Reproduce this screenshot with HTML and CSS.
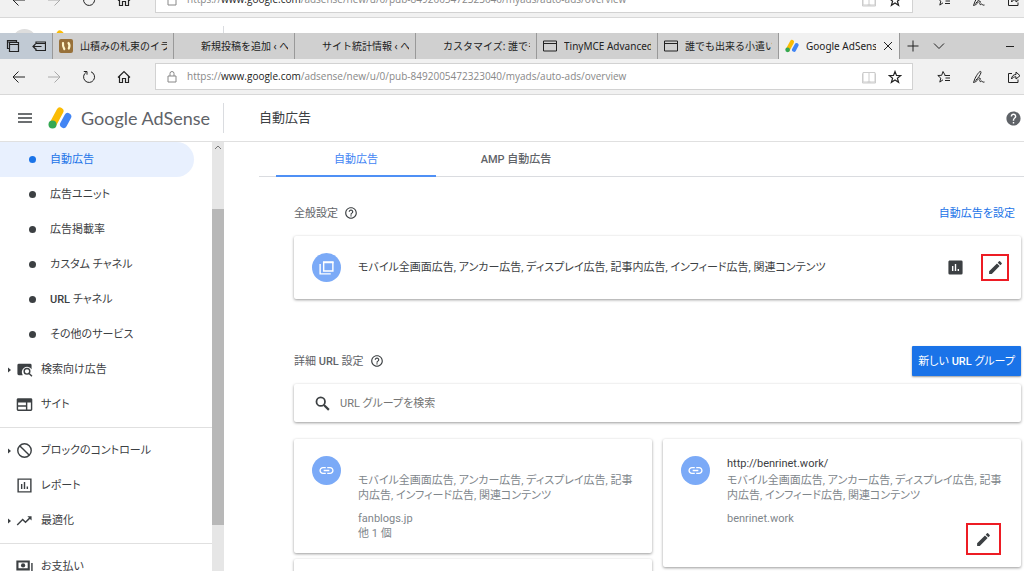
FILE: index.html
```html
<!DOCTYPE html>
<html lang="ja">
<head>
<meta charset="utf-8">
<title>Google AdSense</title>
<link rel="stylesheet" href="styles.css">
</head>
<body>
<svg class="sprite" aria-hidden="true">
  <symbol id="back" viewBox="0 0 14 14"><path d="M13 7H1.500M6.500 1.500 1 7l5.500 5.500" fill="none" stroke="currentColor"/></symbol>
  <symbol id="forward" viewBox="0 0 14 14"><path d="M1 7h11.500M7.500 1.500 13 7l-5.500 5.500" fill="none" stroke="currentColor"/></symbol>
  <symbol id="reload" viewBox="0 0 14 14"><path d="M9 1.800A5.500 5.500 0 1 1 4.300 2.200M1.800 1.500H5v3.200" fill="none" stroke="currentColor"/></symbol>
  <symbol id="home" viewBox="0 0 14 14"><path d="M1 7.500 7 1.500l6 6M2.500 6v6.500h3v-4h3v4h3V6" fill="none" stroke="currentColor" stroke-width="1.200"/></symbol>
  <symbol id="lock" viewBox="0 0 10 14"><path d="M1 6h8v6H1zM3 6V3.500a2 2 0 0 1 4 0V6" fill="none" stroke="currentColor"/></symbol>
  <symbol id="book" viewBox="0 0 14 14"><path d="M7 3v9M1 2.500h12v9.500H1z" fill="none" stroke="currentColor"/><path d="M.5 3.500v9.500h13V3.500M5.500 12h3" fill="none" stroke="currentColor"/></symbol>
  <symbol id="star" viewBox="0 0 14 14"><path d="m7 1.500 1.500 3.900 4.200.2-3.300 2.600 1.200 4.100L7 10l-3.600 2.300 1.200-4.100-3.300-2.600 4.200-.2z" fill="none" stroke="currentColor" stroke-width="1.200"/></symbol>
  <symbol id="hub" viewBox="0 0 14 14"><path d="M8 5 6 1.500 4.700 5.300.8 5.500l3 2.600-1 4L6 9.800M7.500 5.500H13M8.500 8H13M8 10.500h5" fill="none" stroke="currentColor"/></symbol>
  <symbol id="pen" viewBox="0 0 14 14"><path d="M1.500 12.500 3 8.500C5 4.500 7.500 1 8.700 1.500 10 2.200 7 7.500 3.500 10.500M1.500 12.500C5 12 7 7.500 8 8c1 .5-1 3 0 3.500s1.500-1 2-.5 0 1.500 2.500 1" fill="none" stroke="currentColor"/></symbol>
  <symbol id="share" viewBox="0 0 14 14"><path d="M5 3.500H1.500v9h9.500V9.500M4.500 9c.3-3 2-4.500 4.500-4.500V2L13 5.700 9 9V6.800C7 6.800 5.500 7.500 4.500 9z" fill="none" stroke="currentColor"/></symbol>
  <symbol id="ads" viewBox="0 0 24 22"><path d="M5 17 12 4" stroke="#fbbc04" stroke-width="7" stroke-linecap="round"/><path d="m15.500 17.500 4.300-8" stroke="#4285f4" stroke-width="7" stroke-linecap="round"/><circle cx="4.500" cy="17.500" r="4" fill="#34a853"/></symbol>
  <symbol id="window" viewBox="0 0 14 14"><path d="M.5 2h13v10H.5zM.5 4.500h13" fill="none" stroke="currentColor"/></symbol>
  <symbol id="help" viewBox="0 0 24 24"><path fill="currentColor" d="M11 18h2v-2h-2v2zm1-16C6.480 2 2 6.480 2 12s4.480 10 10 10 10-4.480 10-10S17.520 2 12 2zm0 18c-4.410 0-8-3.590-8-8s3.590-8 8-8 8 3.590 8 8-3.590 8-8 8zm0-14c-2.210 0-4 1.790-4 4h2c0-1.100.9-2 2-2s2 .9 2 2c0 2-3 1.750-3 5h2c0-2.250 3-2.500 3-5 0-2.210-1.790-4-4-4z"/></symbol>
  <symbol id="help-solid" viewBox="0 0 24 24"><path fill="currentColor" d="M12 2C6.480 2 2 6.480 2 12s4.480 10 10 10 10-4.480 10-10S17.520 2 12 2zm1 17h-2v-2h2v2zm2.070-7.750-.9.920C13.450 12.900 13 13.500 13 15h-2v-.5c0-1.100.45-2.100 1.170-2.830l1.240-1.260c.37-.36.59-.86.59-1.410 0-1.100-.9-2-2-2s-2 .9-2 2H8c0-2.210 1.790-4 4-4s4 1.790 4 4c0 .88-.36 1.680-.93 2.250z"/></symbol>
  <symbol id="edit" viewBox="0 0 24 24"><path fill="currentColor" d="M3 17.250V21h3.750L17.810 9.940l-3.750-3.750L3 17.250zM20.710 7.040a1 1 0 0 0 0-1.410l-2.340-2.340a1 1 0 0 0-1.410 0l-1.830 1.830 3.750 3.750 1.830-1.830z"/></symbol>
  <symbol id="link" viewBox="0 0 24 24"><path fill="currentColor" d="M3.900 12c0-1.710 1.390-3.100 3.100-3.100h4V7H7c-2.760 0-5 2.240-5 5s2.240 5 5 5h4v-1.900H7c-1.710 0-3.100-1.390-3.100-3.100zM8 13h8v-2H8v2zm9-6h-4v1.900h4c1.710 0 3.100 1.390 3.100 3.100s-1.390 3.100-3.100 3.100h-4V17h4c2.760 0 5-2.240 5-5s-2.240-5-5-5z"/></symbol>
  <symbol id="arrow" viewBox="0 0 4 6"><path fill="currentColor" d="m0 .5 3 2.500-3 2.500z"/></symbol>
</svg>

<div class="window-behind" aria-hidden="true">
  <div class="toolbar">
    <svg class="ico nav"><use href="#back"/></svg><svg class="ico nav dim"><use href="#forward"/></svg><svg class="ico nav"><use href="#reload"/></svg><svg class="ico nav"><use href="#home"/></svg>
    <div class="address"><svg class="ico-lock"><use href="#lock"/></svg><span class="url">https://<b>www.google.com</b>/adsense/new/u/0/pub-8492005472323040/myads/auto-ads/overview</span><svg class="ico faint"><use href="#book"/></svg><svg class="ico"><use href="#star"/></svg></div>
    <div class="tools"><svg class="ico"><use href="#hub"/></svg><svg class="ico"><use href="#pen"/></svg><svg class="ico"><use href="#share"/></svg></div>
  </div>
  <div class="app-header"><span class="menu pressed"></span><svg class="logo"><use href="#ads"/></svg><span class="brand"></span><span class="rule"></span></div>
</div>

<div class="tabbar">
  <div class="tab-tools">
    <svg class="ico" viewBox="0 0 14 14"><path d="M3 9.500H1.500v-8h9V3M3.500 3.500h9v2h-9zM3.500 5.500h9v7h-9zM1.500 3h9" fill="none" stroke="currentColor" stroke-width="1.200"/></svg>
    <svg class="ico" viewBox="0 0 14 14"><path d="M4 5V3h9.500v8.500H4v-2M4 4.500h9.500M9.500 7.500H1M3.500 5 1 7.500 3.500 10" fill="none" stroke="currentColor" stroke-width="1.200"/></svg>
  </div>
  <div class="tab"><svg class="ico" viewBox="0 0 14 14"><rect width="14" height="14" rx="2" fill="#98713a"/><path d="M4 4c-.3 2.500.2 4.500 1.300 6M9.500 4c1.200 1.500 1.200 3.500.3 5.500" stroke="#fff6c8" stroke-width="2.200" stroke-linecap="round" fill="none"/></svg><span>山積みの札束のイラスト</span></div>
  <div class="tab"><i class="ico"></i><span>新規投稿を追加 ‹ へそ</span></div>
  <div class="tab"><i class="ico"></i><span>サイト統計情報 ‹ へそ</span></div>
  <div class="tab"><i class="ico"></i><span>カスタマイズ: 誰でも出来</span></div>
  <div class="tab"><svg class="ico"><use href="#window"/></svg><span>TinyMCE Advanced</span></div>
  <div class="tab"><svg class="ico"><use href="#window"/></svg><span>誰でも出来る小遣い稼</span></div>
  <div class="tab current"><svg class="ico"><use href="#ads"/></svg><span>Google AdSense</span><button class="plain" aria-label="閉じる"><svg class="ico-s" viewBox="0 0 10 10"><path d="m1 1 8 8M9 1 1 9" stroke="currentColor"/></svg></button></div>
  <div class="tab-end">
    <svg class="ico-m" viewBox="0 0 12 12"><path d="M6 .5v11M.5 6h11" stroke="currentColor"/></svg>
    <svg class="ico-m" viewBox="0 0 12 12"><path d="m1 3.500 5 5 5-5" fill="none" stroke="currentColor"/></svg>
    <svg class="ico-m minimize" viewBox="0 0 12 12"><path d="M2 6.500h8" stroke="currentColor"/></svg>
  </div>
</div>

<div class="toolbar">
  <button class="plain nav" aria-label="戻る"><svg class="ico"><use href="#back"/></svg></button>
  <button class="plain nav dim" aria-label="進む"><svg class="ico"><use href="#forward"/></svg></button>
  <button class="plain nav" aria-label="更新"><svg class="ico"><use href="#reload"/></svg></button>
  <button class="plain nav" aria-label="ホーム"><svg class="ico"><use href="#home"/></svg></button>
  <div class="address"><svg class="ico-lock"><use href="#lock"/></svg><span class="url">https://<b>www.google.com</b>/adsense/new/u/0/pub-8492005472323040/myads/auto-ads/overview</span><svg class="ico faint"><use href="#book"/></svg><svg class="ico"><use href="#star"/></svg></div>
  <div class="tools"><svg class="ico"><use href="#hub"/></svg><svg class="ico"><use href="#pen"/></svg><svg class="ico"><use href="#share"/></svg></div>
</div>

<header class="app-header">
  <button class="plain menu" aria-label="メニュー"><svg class="ico" viewBox="0 0 14 14"><path d="M0 3h14M0 7h14M0 11h14" stroke="currentColor" stroke-width="1.600"/></svg></button>
  <svg class="logo"><use href="#ads"/></svg>
  <span class="brand"><b>Google</b> AdSense</span>
  <span class="rule"></span>
  <h1>自動広告</h1>
  <button class="plain help-button" aria-label="ヘルプ"><svg class="ico-l"><use href="#help-solid"/></svg></button>
</header>

<div class="body">
  <nav class="sidebar">
    <div class="group">
      <a class="sub active" href="#">自動広告</a>
      <a class="sub" href="#">広告ユニット</a>
      <a class="sub" href="#">広告掲載率</a>
      <a class="sub" href="#">カスタム チャネル</a>
      <a class="sub" href="#"><span><b>URL</b> チャネル</span></a>
      <a class="sub" href="#">その他のサービス</a>
      <a class="item" href="#"><svg class="caret"><use href="#arrow"/></svg><svg class="ico-l" viewBox="0 0 24 24"><path fill="currentColor" d="M4 4h16a2 2 0 0 1 2 2v5.500A6 6 0 0 0 9.500 20H4a2 2 0 0 1-2-2V6a2 2 0 0 1 2-2z"/><circle cx="15.500" cy="14.500" r="4" fill="none" stroke="currentColor" stroke-width="2"/><path d="m18.500 17.500 4 4" stroke="currentColor" stroke-width="2"/></svg>検索向け広告</a>
      <a class="item" href="#"><i class="caret"></i><svg class="ico-l" viewBox="0 0 24 24"><path fill="currentColor" fill-rule="evenodd" d="M3 3h18a2 2 0 0 1 2 2v14a2 2 0 0 1-2 2H3a2 2 0 0 1-2-2V5c0-1.100.9-2 2-2zm0 6v4h11V9zm0 6v4h11v-4zm13-6v10h5V9z"/></svg>サイト</a>
    </div>
    <div class="group">
      <a class="item" href="#"><svg class="caret"><use href="#arrow"/></svg><svg class="ico-l" viewBox="0 0 24 24"><circle cx="12" cy="12" r="9.500" fill="none" stroke="currentColor" stroke-width="2"/><path d="m5.500 5.500 13 13" stroke="currentColor" stroke-width="2"/></svg>ブロックのコントロール</a>
      <a class="item" href="#"><i class="caret"></i><svg class="ico-l" viewBox="0 0 24 24"><path d="M3 3h18v18H3zM8 10v7M12 7v10M16 13.500V17" fill="none" stroke="currentColor" stroke-width="2"/></svg>レポート</a>
      <a class="item" href="#"><svg class="caret"><use href="#arrow"/></svg><svg class="ico-l" viewBox="0 0 24 24"><path fill="currentColor" d="m16 6 2.290 2.290-4.880 4.880-4-4L1 17.600 2.400 19l7-7 4 4 6.300-6.290L22 12V6z"/></svg>最適化</a>
    </div>
    <div class="group">
      <a class="item" href="#"><i class="caret"></i><svg class="ico-l" viewBox="0 0 24 24"><path d="M2 5h16v11H2z" fill="none" stroke="currentColor" stroke-width="3"/><circle cx="10" cy="10.500" r="3" fill="currentColor"/><path d="M22.500 7v13.500H4" fill="none" stroke="currentColor" stroke-width="2"/></svg>お支払い</a>
    </div>
  </nav>
  <div class="scrollbar" aria-hidden="true">
    <svg class="scroll-up" viewBox="0 0 12 12"><path d="m3 7 3-3 3 3" fill="none" stroke="#777"/></svg>
    <div class="before"></div><div class="thumb"></div><div class="after"></div>
  </div>

  <main>
    <div class="page-tabs" role="tablist">
      <button class="page-tab selected" role="tab" aria-selected="true">自動広告</button>
      <button class="page-tab" role="tab" aria-selected="false">AMP 自動広告</button>
    </div>
    <div class="content">
      <section>
        <div class="section-head"><h2>全般設定</h2><svg class="ico"><use href="#help"/></svg><a class="setup" href="#">自動広告を設定</a></div>
        <div class="card general">
          <span class="badge"><svg class="ico-l" viewBox="0 0 24 24"><path d="M8 4h13v13H8z" fill="none" stroke="#fff" stroke-width="2"/><path d="M7 5h15" stroke="#fff" stroke-width="2"/><path d="M3 7v14h15" fill="none" stroke="#fff" stroke-width="2"/></svg></span>
          <p>モバイル全画面広告, アンカー広告, ディスプレイ広告, 記事内広告, インフィード広告, 関連コンテンツ</p>
          <button class="plain" aria-label="レポート"><svg class="ico-l" viewBox="0 0 24 24"><path fill="currentColor" fill-rule="evenodd" d="M4 2h16a2 2 0 0 1 2 2v16a2 2 0 0 1-2 2H4a2 2 0 0 1-2-2V4c0-1.100.9-2 2-2zm3 8v7h2v-7zm4-3v10h2V7zm4 7v3h2v-3z"/></svg></button>
          <button class="edit" aria-label="編集"><svg class="ico-l"><use href="#edit"/></svg></button>
        </div>
      </section>
      <section class="advanced">
        <div class="section-head"><h2>詳細 <b>URL</b> 設定</h2><svg class="ico"><use href="#help"/></svg><button class="primary">新しい <b>URL</b> グループ</button></div>
        <label class="card search">
          <svg class="ico-l" viewBox="0 0 24 24"><circle cx="9.500" cy="9.500" r="6" fill="none" stroke="currentColor" stroke-width="2.500"/><path d="m14 14 7 7" stroke="currentColor" stroke-width="3"/></svg>
          <input type="text" placeholder="URL グループを検索" aria-label="URL グループを検索">
        </label>
        <div class="columns">
          <div class="column">
            <article class="card group-card">
              <span class="badge"><svg class="ico-l"><use href="#link"/></svg></span>
              <div class="details">
                <h3></h3>
                <p>モバイル全画面広告, アンカー広告, ディスプレイ広告, 記事内広告, インフィード広告, 関連コンテンツ</p>
                <div class="foot"><div class="hosts">fanblogs.jp<br>他 1 個</div></div>
              </div>
            </article>
            <article class="card group-card"><span class="badge"></span></article>
          </div>
          <div class="column">
            <article class="card group-card">
              <span class="badge"><svg class="ico-l"><use href="#link"/></svg></span>
              <div class="details">
                <h3>http://benrinet.work/</h3>
                <p>モバイル全画面広告, アンカー広告, ディスプレイ広告, 記事内広告, インフィード広告, 関連コンテンツ</p>
                <div class="foot"><div class="hosts">benrinet.work</div><button class="edit wide" aria-label="編集"><svg class="ico-l"><use href="#edit"/></svg></button></div>
              </div>
            </article>
          </div>
        </div>
      </section>
    </div>
  </main>
</div>
</body>
</html>
```

FILE: styles.css
```css
* { box-sizing: border-box; }
body {
  margin: 0;
  height: 100vh;
  display: flex;
  flex-direction: column;
  overflow: hidden;
  background: #fff;
  color: #3c4043;
  font: 11px/15px Roboto, "Noto Sans CJK JP", sans-serif;
  font-feature-settings: "palt";
}
h1, h2, h3, p { margin: 0; font-weight: 400; }
a { color: inherit; text-decoration: none; }
button, input { font: inherit; font-feature-settings: inherit; color: inherit; }
svg { flex: none; display: block; }
.sprite { position: absolute; width: 0; height: 0; }
.plain { display: flex; padding: 0; border: 0; background: none; }
.ico { width: 14px; height: 14px; flex: none; }
.ico-s { width: 10px; height: 10px; }
.ico-m { width: 12px; height: 12px; }
.ico-l { width: 17px; height: 17px; }
.ico-lock { width: 10px; height: 14px; color: #888; }
.toolbar .dim { color: #aaa; }
.faint { color: #ccc; }

/* Browser chrome */
.window-behind { flex: none; height: 33px; overflow: hidden; }
.window-behind .toolbar { margin-top: -18px; }
.toolbar {
  flex: none;
  display: flex;
  align-items: center;
  height: 36px;
  padding-left: 12px;
  background: #f1f1f1;
  border-bottom: 1px solid #d8d8d8;
  color: #222;
  font-family: "Open Sans", "Noto Sans CJK JP", sans-serif;
}
.toolbar .nav { margin-right: 21px; }
.address {
  flex: 1;
  display: flex;
  align-items: center;
  height: 27px;
  margin-left: 3px;
  padding: 0 10px 0 11px;
  background: #fff;
  border: 1px solid #d2d2d2;
}
.url { flex: 1; margin-left: 10px; color: #888; font-size: 10px; white-space: nowrap; }
.url b { color: #222; font-weight: 400; }
.address .faint { margin-right: 12px; }
.tools { display: flex; gap: 21px; padding: 0 3px 0 24px; }
.tabbar {
  flex: none;
  display: flex;
  height: 26px;
  background: #d0d0d0;
  color: #222;
  font: 10px/15px "Noto Sans", "Noto Sans CJK JP", sans-serif;
}
.tab-tools { display: flex; align-items: center; gap: 12px; width: 52px; padding-left: 6px; background: #c1cad4; }
.tab {
  flex: none;
  display: flex;
  align-items: center;
  gap: 7px;
  width: 121px;
  padding: 0 6px;
  border-left: 1px solid #999;
}
.tab span { flex: 1; overflow: hidden; white-space: nowrap; }
.tab.current { width: 122px; background: #f1f1f1; border-right: 1px solid #999; }
.tab-end { flex: 1; display: flex; align-items: center; gap: 14px; padding: 0 8px 0 7px; }
.minimize { margin-left: auto; }

/* Application header */
.app-header {
  flex: none;
  display: flex;
  align-items: center;
  height: 47px;
  padding: 0 2px 0 18px;
  border-bottom: 1px solid #e0e0e0;
}
.menu { width: 14px; justify-content: center; }
.pressed { width: 25px; height: 25px; margin: 0 -5px 0 -6px; border-radius: 50%; background: #ddd; }
.logo { width: 24px; height: 22px; margin-left: 16px; }
.brand { width: 142px; margin-left: 9px; color: #5f6368; font: 18px/24px Lato, sans-serif; white-space: nowrap; }
.rule { width: 1px; height: 30px; background: #dadce0; }
h1 { margin-left: 35px; font-size: 13px; line-height: 20px; }
.help-button { margin-left: auto; color: #5f6368; }

/* Sidebar */
.body { flex: 1; display: flex; min-height: 0; }
.sidebar { flex: none; width: 212px; overflow: hidden; }
.group { padding: 5px 0; border-bottom: 1px solid #e0e0e0; }
.group:first-child { padding-top: 0; }
.sub, .item { display: flex; align-items: center; height: 35px; }
.sub { padding-left: 29px; margin-right: 18px; gap: 14px; }
.sub::before { content: ""; width: 7px; height: 7px; border-radius: 50%; background: currentColor; }
.active { color: #1a73e8; background: #e8f0fe; border-radius: 0 18px 18px 0; }
.item { padding-left: 8px; }
.caret { width: 4px; height: 6px; margin-right: 4px; }
.item .ico-l { margin-right: 8px; }
.scrollbar { flex: none; display: flex; flex-direction: column; width: 12px; background: #e6e6e6; }
.scroll-up { width: 12px; height: 12px; }
.before { flex: 55; }
.thumb { flex: 316; background: #b8b8b8; }
.after { flex: 46; }

/* Page */
main { flex: 1; min-width: 0; overflow: hidden; }
.page-tabs { display: flex; height: 35px; margin-left: 35px; padding-left: 17px; border-bottom: 1px solid #dadce0; }
.page-tab { width: 160px; height: 35px; padding: 2px 0 0; border: 0; border-bottom: 2px solid transparent; background: none; color: #5f6368; font-weight: 500; }
.selected { color: #4285f4; border-color: #4f90f5; font-weight: 400; }
.content { padding: 21px 3px 0 70px; }
.section-head { display: flex; align-items: center; height: 30px; margin-bottom: 8px; }
h2 { margin-right: 6px; color: #5f6368; font-size: 11px; line-height: 15px; }
b { font-weight: 500; }
.brand b { font-weight: 400; }
.setup { margin-left: auto; padding-right: 6px; color: #1a73e8; }
.card { background: #fff; border-radius: 2px; box-shadow: 0 1px 3px rgba(0, 0, 0, .4); }
.general { display: flex; align-items: center; height: 63px; padding: 0 12px 0 18px; gap: 17px; }
.general p { flex: 1; }
.badge { flex: none; display: flex; align-items: center; justify-content: center; width: 29px; height: 29px; border-radius: 50%; background: #7baaf7; color: #fff; }
.edit { display: flex; align-items: center; justify-content: center; width: 28px; height: 27px; padding: 0; border: 2px solid #ed1c24; background: none; }
.advanced { margin-top: 47px; }
.primary { margin-left: auto; height: 30px; padding: 0 6px; border: 0; border-radius: 1px; background: #1a73e8; color: #fff; box-shadow: 0 1px 2px rgba(0, 0, 0, .4); white-space: nowrap; }
.search { display: flex; align-items: center; gap: 9px; height: 38px; padding-left: 20px; }
.search input { flex: 1; padding: 0; border: 0; outline: 0; background: none; }
.search input::placeholder { color: #757575; opacity: 1; }
.columns { display: flex; align-items: flex-start; gap: 11px; margin-top: 17px; }
.column { flex: 1; display: flex; flex-direction: column; gap: 6px; min-width: 0; }
.group-card { display: flex; gap: 17px; padding: 17px 12px 12px 18px; color: #80868b; }
.details { flex: 1; min-width: 0; }
h3 { min-height: 15px; margin-bottom: 2px; color: #3c4043; font-size: 11px; line-height: 15px; }
.group-card p { margin-right: 4px; }
.foot { display: flex; justify-content: space-between; margin-top: 8px; }
.wide { width: 35px; height: 32px; margin: 12px 8px 0 0; color: #3c4043; }
```
